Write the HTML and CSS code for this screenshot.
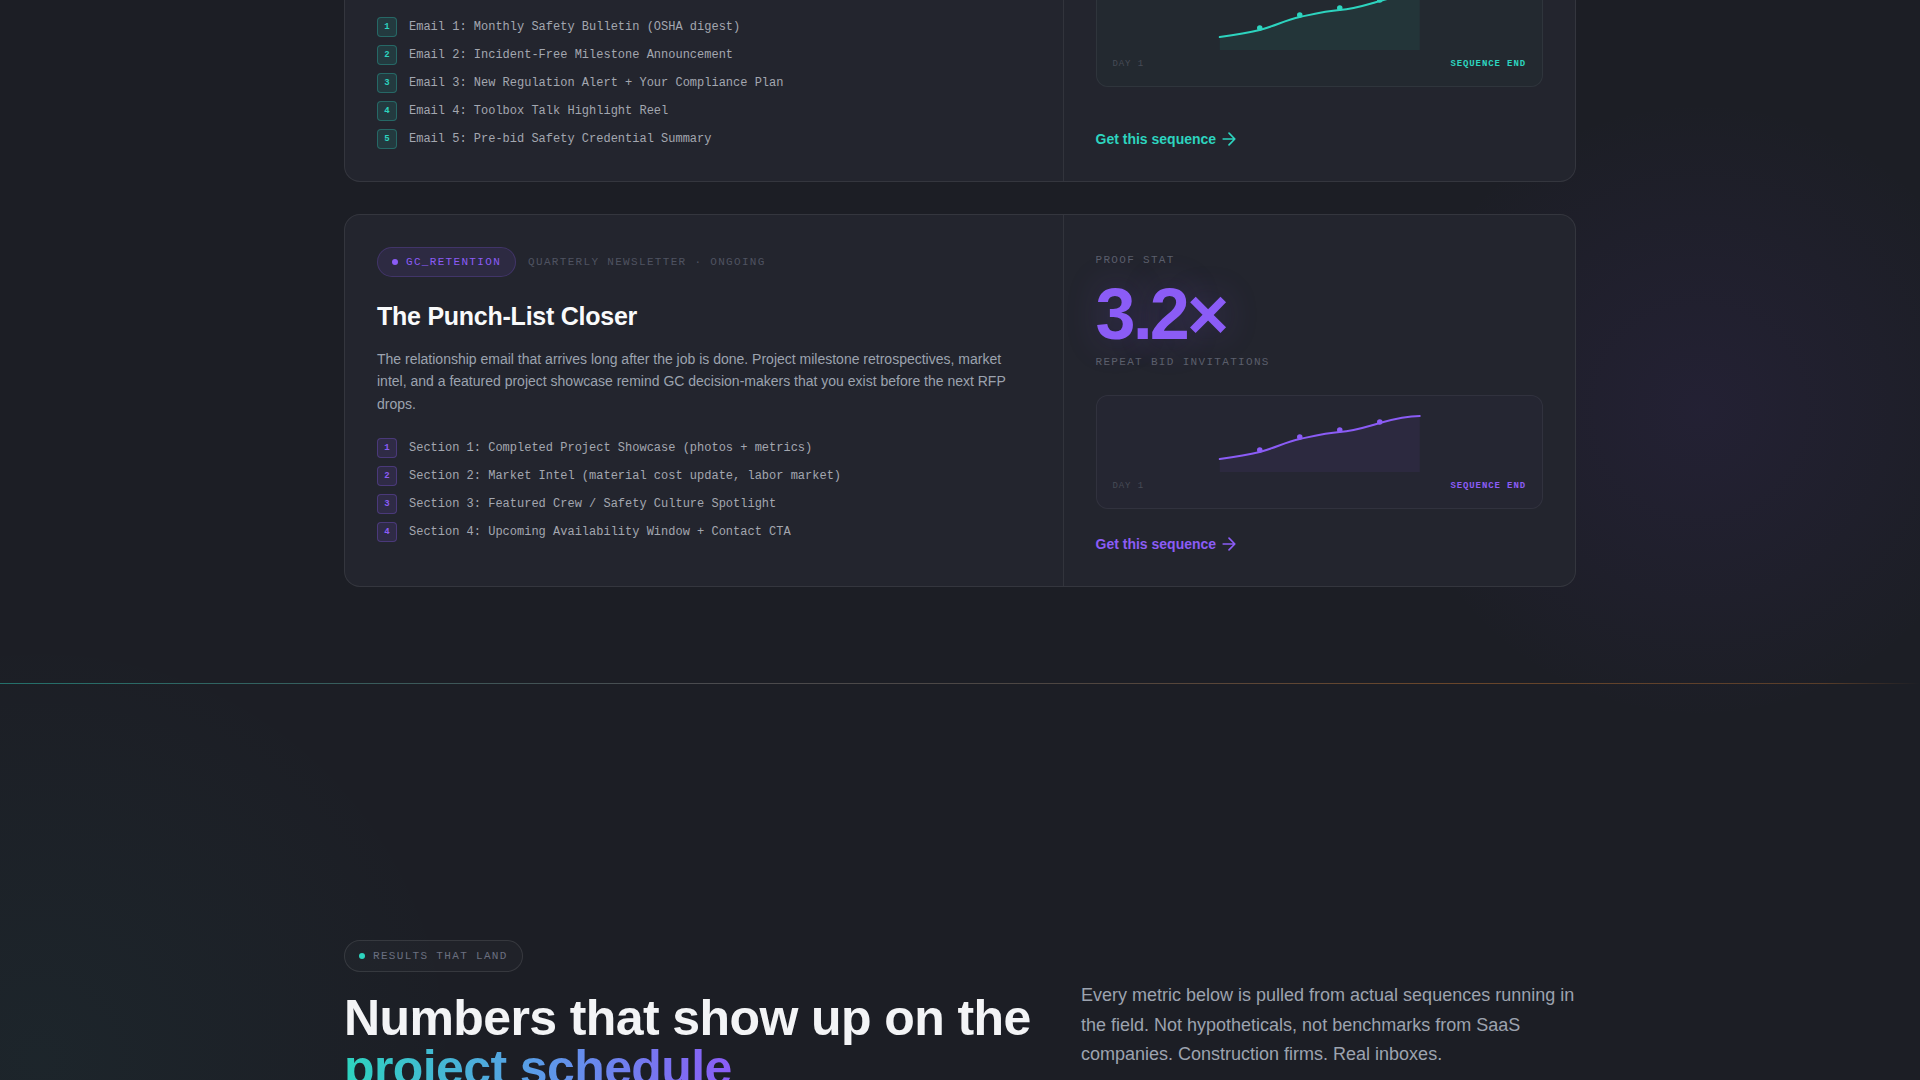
FILE: index.html
```html
<!DOCTYPE html>
<html lang="en">
<head>
<meta charset="utf-8">
<title>Sequences — Results that land</title>
<link rel="stylesheet" href="styles.css">
</head>
<body>
<main class="page">
  <section class="sequences">
    <div class="container seq-list">
      <article class="seq-card seq-card--teal seq-card--clipped">
        <div class="seq-main">
          <ol class="steps">
            <li class="step"><span class="step-num">1</span><span class="step-text">Email 1: Monthly Safety Bulletin (OSHA digest)</span></li>
            <li class="step"><span class="step-num">2</span><span class="step-text">Email 2: Incident-Free Milestone Announcement</span></li>
            <li class="step"><span class="step-num">3</span><span class="step-text">Email 3: New Regulation Alert + Your Compliance Plan</span></li>
            <li class="step"><span class="step-num">4</span><span class="step-text">Email 4: Toolbox Talk Highlight Reel</span></li>
            <li class="step"><span class="step-num">5</span><span class="step-text">Email 5: Pre-bid Safety Credential Summary</span></li>
          </ol>
        </div>
        <aside class="seq-side">
          <div class="chart-box">
            <svg class="chart" viewBox="0 0 200 60" aria-hidden="true">
              <path class="chart-fill" d="M0,47 C14,45 27,43 40,40 C55,36 66,30 80,27 C94,24 106,21 120,20 C134,19 146,15 160,11 C174,7 186,4 200,4 L200,60 L0,60 Z"/>
              <path class="chart-line" d="M0,47 C14,45 27,43 40,40 C55,36 66,30 80,27 C94,24 106,21 120,20 C134,19 146,15 160,11 C174,7 186,4 200,4"/>
              <circle class="chart-dot" cx="40" cy="38" r="2.75"/>
              <circle class="chart-dot" cx="80" cy="25" r="2.75"/>
              <circle class="chart-dot" cx="120" cy="18" r="2.75"/>
              <circle class="chart-dot" cx="160" cy="10" r="2.75"/>
            </svg>
            <div class="chart-axis"><span>DAY 1</span><span class="axis-end">SEQUENCE END</span></div>
          </div>
          <a class="seq-cta" href="#">Get this sequence
            <svg class="cta-arrow" viewBox="0 0 24 24" aria-hidden="true"><path d="M5 12h14M12 5l7 7-7 7"/></svg>
          </a>
        </aside>
      </article>

      <article class="seq-card seq-card--purple">
        <div class="seq-main">
          <div class="seq-meta">
            <span class="tag"><span class="tag-dot"></span>GC_RETENTION</span>
            <span class="meta-text">QUARTERLY NEWSLETTER · ONGOING</span>
          </div>
          <h3 class="seq-title">The Punch-List Closer</h3>
          <p class="seq-desc">The relationship email that arrives long after the job is done. Project milestone retrospectives, market intel, and a featured project showcase remind GC decision-makers that you exist before the next RFP drops.</p>
          <ol class="steps">
            <li class="step"><span class="step-num">1</span><span class="step-text">Section 1: Completed Project Showcase (photos + metrics)</span></li>
            <li class="step"><span class="step-num">2</span><span class="step-text">Section 2: Market Intel (material cost update, labor market)</span></li>
            <li class="step"><span class="step-num">3</span><span class="step-text">Section 3: Featured Crew / Safety Culture Spotlight</span></li>
            <li class="step"><span class="step-num">4</span><span class="step-text">Section 4: Upcoming Availability Window + Contact CTA</span></li>
          </ol>
        </div>
        <aside class="seq-side">
          <div class="stat-label">PROOF STAT</div>
          <div class="stat-value">3.2×</div>
          <div class="stat-sub">REPEAT BID INVITATIONS</div>
          <div class="chart-box">
            <svg class="chart" viewBox="0 0 200 60" aria-hidden="true">
              <path class="chart-fill" d="M0,47 C14,45 27,43 40,40 C55,36 66,30 80,27 C94,24 106,21 120,20 C134,19 146,15 160,11 C174,7 186,4 200,4 L200,60 L0,60 Z"/>
              <path class="chart-line" d="M0,47 C14,45 27,43 40,40 C55,36 66,30 80,27 C94,24 106,21 120,20 C134,19 146,15 160,11 C174,7 186,4 200,4"/>
              <circle class="chart-dot" cx="40" cy="38" r="2.75"/>
              <circle class="chart-dot" cx="80" cy="25" r="2.75"/>
              <circle class="chart-dot" cx="120" cy="18" r="2.75"/>
              <circle class="chart-dot" cx="160" cy="10" r="2.75"/>
            </svg>
            <div class="chart-axis"><span>DAY 1</span><span class="axis-end">SEQUENCE END</span></div>
          </div>
          <a class="seq-cta" href="#">Get this sequence
            <svg class="cta-arrow" viewBox="0 0 24 24" aria-hidden="true"><path d="M5 12h14M12 5l7 7-7 7"/></svg>
          </a>
        </aside>
      </article>
    </div>
  </section>

  <div class="divider"></div>

  <section class="results">
    <div class="container results-head">
      <div class="results-intro">
        <span class="eyebrow"><span class="eyebrow-dot"></span>RESULTS THAT LAND</span>
        <h2 class="results-title">Numbers that show up on the<br><span class="grad">project schedule</span></h2>
      </div>
      <p class="results-lead">Every metric below is pulled from actual sequences running in the field. Not hypotheticals, not benchmarks from SaaS companies. Construction firms. Real inboxes.</p>
    </div>
  </section>
</main>
</body>
</html>
```

FILE: styles.css
```css
* {
  box-sizing: border-box;
  margin: 0;
  padding: 0;
}

html {
  background: #1c1e25;
}

body {
  font-family: "Liberation Sans", Arial, sans-serif;
  color: #e5e7eb;
  min-height: 100vh;
  overflow: hidden;
  background:
    radial-gradient(circle at 1700px 410px, rgba(109, 60, 200, 0.09) 0, rgba(109, 60, 200, 0.045) 170px, rgba(109, 60, 200, 0) 310px),
    radial-gradient(circle at 40px 1060px, rgba(45, 212, 191, 0.04) 0, rgba(45, 212, 191, 0) 430px),
    #1c1e25;
}

.container {
  max-width: 1280px;
  margin: 0 auto;
  padding: 0 24px;
}

/* ---------- sequence cards ---------- */

.sequences {
  padding-bottom: 96px;
}

.seq-list {
  display: flex;
  flex-direction: column;
  gap: 32px;
}

.seq-card {
  --accent: #2dd4bf;
  --accent-rgb: 45, 212, 191;
  display: grid;
  grid-template-columns: 1.4fr 1fr;
  background: #23252e;
  border: 1px solid rgba(255, 255, 255, 0.08);
  border-radius: 16px;
}

.seq-card--teal {
  --accent: #2dd4bf;
  --accent-rgb: 45, 212, 191;
}

.seq-card--purple {
  --accent: #8b5cf6;
  --accent-rgb: 139, 92, 246;
}

/* the page is scrolled: the first card's head is above the fold */
.seq-card--clipped {
  margin-top: -60px;
}

.seq-main {
  padding: 32px;
  display: flex;
  flex-direction: column;
}

.seq-side {
  padding: 32px;
  border-left: 1px solid rgba(255, 255, 255, 0.07);
  display: flex;
  flex-direction: column;
}

.seq-meta {
  display: flex;
  align-items: center;
  gap: 12px;
}

.tag {
  display: inline-flex;
  align-items: center;
  gap: 8px;
  padding: 6px 14px;
  border-radius: 999px;
  border: 1px solid rgba(var(--accent-rgb), 0.22);
  background: rgba(var(--accent-rgb), 0.1);
  font-family: "Liberation Mono", "DejaVu Sans Mono", monospace;
  font-size: 11px;
  line-height: 16px;
  letter-spacing: 0.12em;
  color: var(--accent);
}

.tag-dot {
  width: 6px;
  height: 6px;
  border-radius: 50%;
  background: var(--accent);
}

.meta-text {
  font-family: "Liberation Mono", "DejaVu Sans Mono", monospace;
  font-size: 11px;
  line-height: 16px;
  letter-spacing: 0.12em;
  color: #4f5361;
}

.seq-title {
  margin-top: 23px;
  font-size: 25px;
  line-height: 32px;
  font-weight: 700;
  letter-spacing: -0.01em;
  color: #f9fafb;
}

.seq-desc {
  margin-top: 16px;
  font-size: 14px;
  line-height: 1.6;
  color: #9ca3af;
}

.steps {
  list-style: none;
  margin-top: 23px;
  display: flex;
  flex-direction: column;
  gap: 8px;
}

.seq-card--clipped .steps {
  margin-top: 44px;
}

.step {
  display: flex;
  align-items: center;
  gap: 12px;
  height: 20px;
  font-family: "Liberation Mono", "DejaVu Sans Mono", monospace;
  font-size: 12px;
  color: #a3a7b0;
}

.step-num {
  flex: none;
  width: 20px;
  height: 20px;
  display: grid;
  place-items: center;
  border-radius: 4px;
  border: 1px solid rgba(var(--accent-rgb), 0.3);
  background: rgba(var(--accent-rgb), 0.12);
  color: var(--accent);
  font-size: 9px;
  font-weight: 700;
}

/* ---------- side column ---------- */

.stat-label,
.stat-sub {
  font-family: "Liberation Mono", "DejaVu Sans Mono", monospace;
  font-size: 11px;
  line-height: 16px;
  letter-spacing: 0.12em;
  color: #5b5f6c;
}

.stat-label {
  margin-top: 5px;
}

.stat-value {
  margin-top: 10px;
  font-size: 72px;
  line-height: 72px;
  font-weight: 700;
  letter-spacing: -0.04em;
  color: var(--accent);
  text-shadow: 0 0 36px rgba(var(--accent-rgb), 0.25);
}

.stat-sub {
  margin-top: 4px;
}

.chart-box {
  margin-top: 25px;
  margin-bottom: 25px;
  padding: 16px;
  border: 1px solid rgba(255, 255, 255, 0.06);
  border-radius: 12px;
  background: rgba(var(--accent-rgb), 0.025);
}

.seq-card--clipped .chart-box {
  margin-top: 0;
}

.chart {
  display: block;
  width: 100%;
  height: 60px;
  overflow: visible;
}

.chart-fill {
  fill: rgba(var(--accent-rgb), 0.07);
}

.chart-line {
  fill: none;
  stroke: var(--accent);
  stroke-width: 2;
  stroke-linecap: round;
}

.chart-dot {
  fill: var(--accent);
}

.chart-axis {
  margin-top: 8px;
  display: flex;
  justify-content: space-between;
  font-family: "Liberation Mono", "DejaVu Sans Mono", monospace;
  font-size: 9px;
  line-height: 12px;
  letter-spacing: 0.1em;
  color: #474b56;
}

.axis-end {
  color: var(--accent);
  font-weight: 700;
}

.seq-cta {
  margin-top: auto;
  align-self: flex-start;
  display: inline-flex;
  align-items: center;
  gap: 3px;
  font-size: 14px;
  line-height: 20px;
  font-weight: 700;
  color: var(--accent);
  text-decoration: none;
}

.cta-arrow {
  width: 20px;
  height: 20px;
  fill: none;
  stroke: currentColor;
  stroke-width: 2;
  stroke-linecap: round;
  stroke-linejoin: round;
}

/* ---------- divider ---------- */

.divider {
  height: 1px;
  background: linear-gradient(90deg,
    rgba(45, 212, 191, 0.45) 0%,
    rgba(160, 160, 160, 0.35) 35%,
    rgba(150, 130, 110, 0.4) 55%,
    rgba(200, 120, 50, 0.45) 75%,
    rgba(200, 120, 50, 0.35) 95%,
    rgba(200, 120, 50, 0) 100%);
}

/* ---------- results ---------- */

.results {
  padding-top: 256px;
}

.results-head {
  display: grid;
  grid-template-columns: 1.4fr 1fr;
  column-gap: 44px;
  align-items: end;
}

.results-intro {
  display: flex;
  flex-direction: column;
  align-items: flex-start;
}

.eyebrow {
  display: inline-flex;
  align-items: center;
  gap: 8px;
  padding: 7px 14px;
  border-radius: 999px;
  border: 1px solid rgba(255, 255, 255, 0.1);
  background: rgba(255, 255, 255, 0.02);
  font-family: "Liberation Mono", "DejaVu Sans Mono", monospace;
  font-size: 11px;
  line-height: 16px;
  letter-spacing: 0.12em;
  color: #6b7080;
}

.eyebrow-dot {
  width: 6px;
  height: 6px;
  border-radius: 50%;
  background: #2dd4bf;
}

.results-title {
  margin-top: 21px;
  font-size: 50px;
  line-height: 50px;
  font-weight: 700;
  letter-spacing: -0.012em;
  color: #f3f4f6;
}

.grad {
  background: linear-gradient(90deg, #2dd4bf 0%, #5b9be8 50%, #8b5cf6 100%);
  -webkit-background-clip: text;
  background-clip: text;
  color: transparent;
}

.results-lead {
  margin-bottom: 23px;
  font-size: 18px;
  line-height: 1.65;
  color: #9ca3af;
}
```
